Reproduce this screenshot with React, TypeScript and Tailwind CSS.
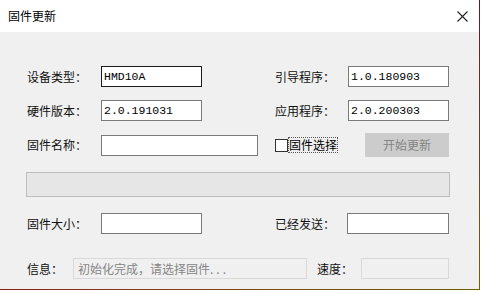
import React from "react";

const cjk = { fontFamily: '"Noto Sans CJK SC", "Noto Sans", sans-serif' };
const mono = { fontFamily: '"Liberation Mono", "Noto Sans CJK SC", monospace' };

function Label({ text, w }: { text: string; w: string }) {
  return (
    <span className={`${w} shrink-0 text-[12px] leading-none text-[#111]`} style={cjk}>
      {text}
    </span>
  );
}

function Field({ value, w, dark }: { value?: string; w: string; dark?: boolean }) {
  return (
    <div
      className={`${w} h-[21px] shrink-0 bg-white border ${dark ? "border-[#1a1a1a]" : "border-[#7a7a7a]"} flex items-center pl-[2px] text-[11.5px] text-black`}
      style={mono}
    >
      {value}
    </div>
  );
}

export default function App() {
  return (
    <div className="w-[482px] h-[291px] bg-white overflow-hidden" style={cjk}>
      <div className="flex">
        <div className="w-[479px] h-[289px] flex flex-col">
          {/* title bar */}
          <div className="h-[32px] bg-white flex items-center justify-between pl-[8px] pr-[11px]">
            <span className="text-[12px] text-black" style={cjk}>
              固件更新
            </span>
            <svg width="11" height="11" viewBox="0 0 11 11">
              <path d="M0.5 0.5 L10.5 10.5 M10.5 0.5 L0.5 10.5" stroke="#222" strokeWidth="1.1" />
            </svg>
          </div>

          {/* body */}
          <div className="flex-1 bg-[#f0f0f0] flex flex-col pl-[27px]">
            <div className="mt-[34px] flex items-center h-[21px]">
              <div className="w-[248px] flex items-center">
                <Label text="设备类型：" w="w-[74px]" />
                <Field value="HMD10A" w="w-[101px]" dark />
              </div>
              <Label text="引导程序：" w="w-[73px]" />
              <Field value="1.0.180903" w="w-[101px]" />
            </div>

            <div className="mt-[13px] flex items-center h-[21px]">
              <div className="w-[248px] flex items-center">
                <Label text="硬件版本：" w="w-[74px]" />
                <Field value="2.0.191031" w="w-[101px]" />
              </div>
              <Label text="应用程序：" w="w-[73px]" />
              <Field value="2.0.200303" w="w-[101px]" />
            </div>

            <div className="mt-[12px] flex items-center h-[24px]">
              <div className="w-[248px] flex items-center">
                <Label text="固件名称：" w="w-[74px]" />
                <Field w="w-[157px]" />
              </div>
              <div className="w-[90px] flex items-center">
                <div className="w-[13px] h-[13px] bg-white border border-[#333]" />
                <span className="ml-[1px] text-[12px] leading-[14px] text-black outline outline-1 outline-dotted outline-[#555]" style={cjk}>
                  固件选择
                </span>
              </div>
              <button
                className="w-[84px] h-[24px] bg-[#cccccc] border border-[#cccccc] text-[12px] text-[#848484] flex items-center justify-center"
                style={cjk}
              >
                开始更新
              </button>
            </div>

            <div className="mt-[15px] -ml-[1px] w-[424px] h-[25px] bg-[#e6e6e6] border border-[#bcbcbc]" />

            <div className="mt-[16px] flex items-center h-[21px]">
              <div className="w-[248px] flex items-center">
                <Label text="固件大小：" w="w-[74px]" />
                <Field w="w-[101px]" />
              </div>
              <Label text="已经发送：" w="w-[72px]" />
              <Field w="w-[102px]" />
            </div>

            <div className="mt-[24px] flex items-center h-[21px]">
              <Label text="信息：" w="w-[46px]" />
              <div
                className="w-[234px] h-[21px] border border-[#d9d9d9] bg-[#f0f0f0] flex items-center pl-[4px] text-[12px] text-[#858585]"
                style={cjk}
              >
                初始化完成，请选择固件<span className="tracking-[3px]">...</span>
              </div>
              <div className="w-[54px] flex justify-end pr-[8px]">
                <Label text="速度：" w="w-auto" />
              </div>
              <div className="w-[88px] h-[21px] border border-[#d9d9d9] bg-[#f0f0f0]" />
            </div>
          </div>
        </div>
        <div className="w-[1px] h-[289px] bg-gradient-to-b from-[#5a1830] to-[#6e6100]" />
      </div>
      <div className="w-[480px] h-[1px] bg-gradient-to-r from-[#8b1e1e] to-[#6e6100]" />
    </div>
  );
}
